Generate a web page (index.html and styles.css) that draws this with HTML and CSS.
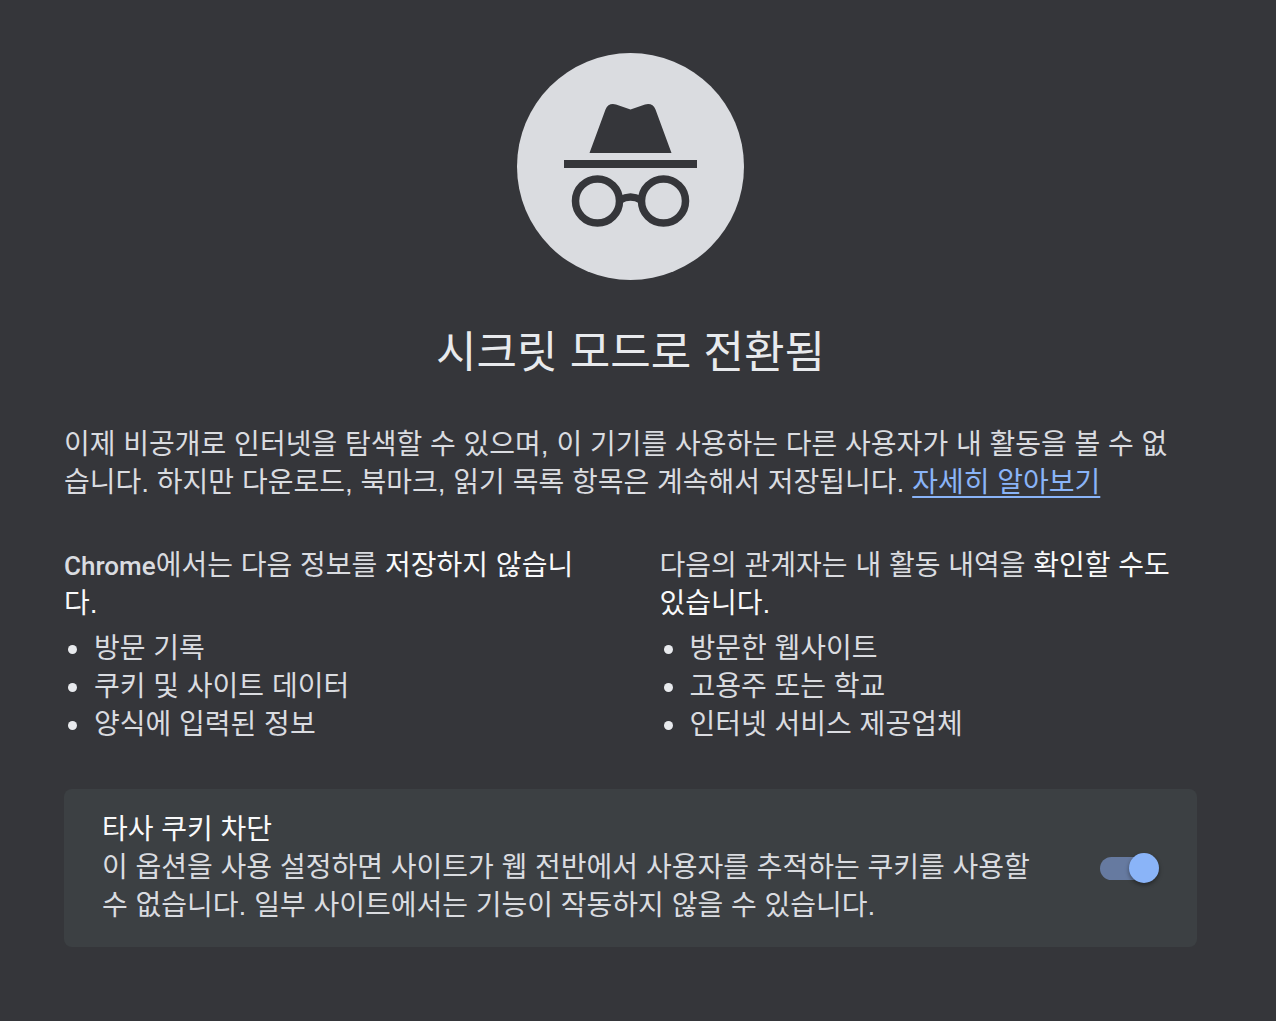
FILE: index.html
```html
<!DOCTYPE html>
<html lang="ko">
<head>
    <meta charset="UTF-8">
    <meta name="viewport" content="width=device-width, initial-scale=1.0">
    <title>새 시크릿 탭</title>
    <link rel="stylesheet" href="styles.css">
</head>
<body>
    <main class="container">
        <svg class="icon" viewBox="0 0 227 227" aria-hidden="true">
            <circle class="icon-disc" cx="113.5" cy="113.5" r="113.5"/>
            <path class="icon-fill" d="M72.5 100 L88.5 56.5 Q91.5 49.5 99 51.5 L113.5 56.5 L128 51.5 Q135.5 49.5 138.5 56.5 L154.5 100 Z"/>
            <path class="icon-fill" d="M47 107h133v8H47z"/>
            <g class="icon-line">
                <circle cx="80.5" cy="148" r="22"/>
                <circle cx="146.5" cy="148" r="22"/>
                <path d="M103 147 Q113.5 141 124 147"/>
            </g>
        </svg>

        <h1>시크릿 모드로 전환됨</h1>

        <p class="intro">이제 비공개로 인터넷을 탐색할 수 있으며, 이 기기를 사용하는 다른 사용자가 내 활동을 볼 수 없습니다. 하지만 다운로드, 북마크, 읽기 목록 항목은 계속해서 저장됩니다. <a href="#">자세히 알아보기</a></p>

        <div class="columns">
            <section>
                <p><span class="brand">Chrome</span>에서는 다음 정보를 <em>저장하지 않습니다.</em></p>
                <ul>
                    <li>방문 기록</li>
                    <li>쿠키 및 사이트 데이터</li>
                    <li>양식에 입력된 정보</li>
                </ul>
            </section>
            <section>
                <p>다음의 관계자는 내 활동 내역을 <em>확인할 수도 있습니다.</em></p>
                <ul>
                    <li>방문한 웹사이트</li>
                    <li>고용주 또는 학교</li>
                    <li>인터넷 서비스 제공업체</li>
                </ul>
            </section>
        </div>

        <div class="cookie-box">
            <div class="cookie-text">
                <label for="block-cookies">타사 쿠키 차단</label>
                <p id="cookie-help">이 옵션을 사용 설정하면 사이트가 웹 전반에서 사용자를 추적하는 쿠키를 사용할 수 없습니다. 일부 사이트에서는 기능이 작동하지 않을 수 있습니다.</p>
            </div>
            <input type="checkbox" role="switch" id="block-cookies" class="toggle" aria-describedby="cookie-help" checked>
        </div>
    </main>
</body>
</html>
```

FILE: styles.css
```css
:root {
    --background: #35363a;
    --foreground: #dadce0;
    --emphasis: #f8f9fa;
    --card: #3c4043;
    --link: #8ab4f8;
}

* {
    box-sizing: border-box;
}

body {
    margin: 0;
    padding: 53px 79px 64px 64px;
    background-color: var(--background);
    color: var(--foreground);
    font-family: "Liberation Sans", "Noto Sans CJK KR", sans-serif;
    font-size: 28px;
    line-height: 38px;
}

.container {
    max-width: 1134px;
    margin: 0 auto;
}

.icon {
    display: block;
    width: 227px;
    height: 227px;
    margin: 0 auto;
}

.icon-disc {
    fill: #dadce0;
}

.icon-fill {
    fill: var(--background);
}

.icon-line {
    fill: none;
    stroke: var(--background);
    stroke-width: 7.5;
}

h1 {
    margin: 45px 0;
    color: #e8eaed;
    font-size: 44px;
    font-weight: 400;
    line-height: 56px;
    text-align: center;
}

p {
    margin: 0;
}

a {
    color: var(--link);
    text-decoration: underline 2px;
    text-decoration-skip-ink: none;
    text-underline-offset: 4px;
}

.intro {
    padding-right: 16px;
}

.columns {
    display: grid;
    grid-template-columns: 1fr 1fr;
    gap: 58px;
    margin: 45px 0;
}

.brand {
    font-family: Roboto, sans-serif;
    font-size: 26px;
    font-weight: 500;
    line-height: 1;
}

em {
    color: var(--emphasis);
    font-style: normal;
}

ul {
    margin: 7px 0 0;
    padding-left: 30px;
    list-style: none;
}

li::before {
    content: "";
    float: left;
    width: 9px;
    height: 9px;
    margin: 15px 0 0 -26px;
    border-radius: 50%;
    background-color: #e8eaed;
}

.cookie-box {
    display: flex;
    align-items: center;
    gap: 58px;
    padding: 22px 38px;
    border-radius: 8px;
    background-color: var(--card);
}

.cookie-text {
    flex: 1;
}

.cookie-text label {
    color: var(--emphasis);
}

.toggle {
    appearance: none;
    display: flex;
    align-items: center;
    justify-content: flex-end;
    flex: none;
    width: 52px;
    height: 23px;
    margin: 0 7px 0 0;
    border-radius: 12px;
    background-color: #667aa0;
    cursor: pointer;
}

.toggle::before {
    content: "";
    flex: none;
    width: 30px;
    height: 30px;
    margin-right: -7px;
    border-radius: 50%;
    background-color: var(--link);
    box-shadow: 0 2px 4px rgba(0, 0, 0, 0.4);
}
```
